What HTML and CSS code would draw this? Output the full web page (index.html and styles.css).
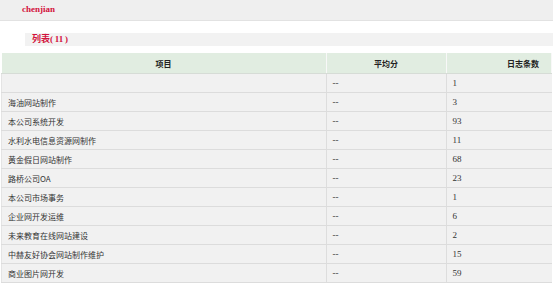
FILE: index.html
```html
<!DOCTYPE html>
<html>
<head>
<meta charset="utf-8">
<link rel="stylesheet" href="styles.css">
</head>
<body>
<div class="topbar"><span class="user">chenjian</span></div>
<div class="titlebar"><span class="title">列表(&thinsp;11&thinsp;)</span></div>
<table class="list">
<thead>
<tr><th class="c1">项目</th><th class="c2">平均分</th><th class="c3">日志条数</th></tr>
</thead>
<tbody>
<tr><td></td><td>--</td><td>1</td></tr>
<tr><td>海油网站制作</td><td>--</td><td>3</td></tr>
<tr><td>本公司系统开发</td><td>--</td><td>93</td></tr>
<tr><td>水利水电信息资源网制作</td><td>--</td><td>11</td></tr>
<tr><td>黄金假日网站制作</td><td>--</td><td>68</td></tr>
<tr><td>路桥公司OA</td><td>--</td><td>23</td></tr>
<tr><td>本公司市场事务</td><td>--</td><td>1</td></tr>
<tr><td>企业网开发运维</td><td>--</td><td>6</td></tr>
<tr><td>未来教育在线网站建设</td><td>--</td><td>2</td></tr>
<tr><td>中赫友好协会网站制作维护</td><td>--</td><td>15</td></tr>
<tr><td>商业图片网开发</td><td>--</td><td>59</td></tr>
</tbody>
</table>
</body>
</html>
```
FILE: styles.css
```css
html, body {
  margin: 0;
  padding: 0;
  background: #ffffff;
  font-family: "Liberation Serif", "Noto Sans CJK SC", serif;
  font-size: 8px;
  color: #222;
}
.topbar {
  height: 21px;
  background: #efefef;
  border-bottom: 1px solid #e2e2e2;
  padding-left: 22px;
  box-sizing: border-box;
}
.user {
  display: inline-block;
  color: #d3123c;
  font-weight: bold;
  font-size: 9px;
  line-height: 19px;
}
.titlebar {
  margin: 12px 0 0 25px;
  height: 13px;
  background: #f2f2f2;
  padding-left: 7px;
}
.title {
  color: #d3123c;
  font-weight: bold;
  font-size: 9px;
  line-height: 13px;
  font-family: "Liberation Serif", "Noto Sans CJK SC", serif;
}
.list {
  margin: 7px 1px 0 1px;
  width: 551px;
  border-collapse: collapse;
  table-layout: fixed;
}
.list th {
  background: #e1ede1;
  height: 20px;
  padding: 0;
  font-weight: bold;
  font-size: 8px;
  border-right: 1px solid #f8f8f8;
  border-bottom: 1px solid #d6dcd6;
  font-family: "Noto Sans CJK SC", sans-serif;
}
.list th.c1 { width: 324px; text-align: center; }
.list th.c2 { width: 119px; text-align: center; }
.list th.c3 { text-align: right; padding-right: 12px; }
.list td {
  background: #f1f1f1;
  height: 18px;
  padding: 0 0 0 6px;
  border-bottom: 1px solid #dcdcdc;
  border-right: 1px solid #dddddd;
  font-family: "Noto Sans CJK SC", sans-serif;
  font-size: 8px;
  color: #333;
}
.list td + td {
  font-family: "Liberation Serif", serif;
  font-size: 9px;
}
.list td:last-child { border-right: none; }
.list td:first-child { border-left: 1px solid #e4e4e4; }
```
